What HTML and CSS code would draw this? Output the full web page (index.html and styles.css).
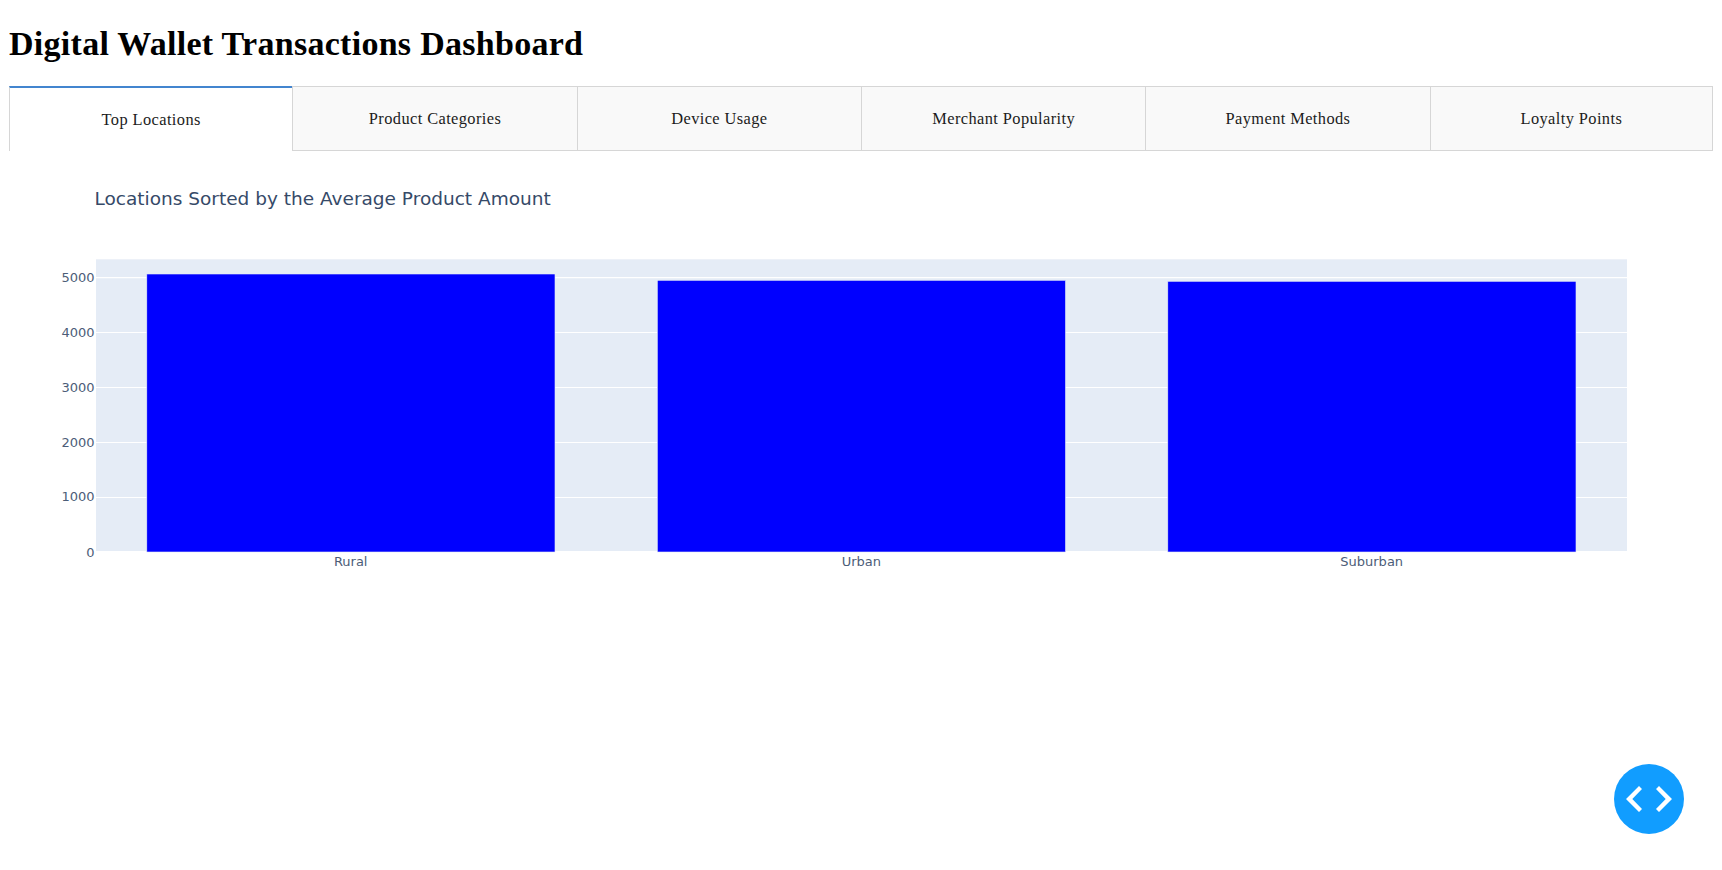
FILE: index.html
```html
<!DOCTYPE html>
<html lang="en">
<head>
<meta charset="utf-8">
<title>Digital Wallet Transactions Dashboard</title>
<link rel="stylesheet" href="styles.css">
</head>
<body>
<h1>Digital Wallet Transactions Dashboard</h1>
<nav class="tabs">
<div class="tab selected">Top Locations</div><div class="tab">Product Categories</div><div class="tab">Device Usage</div><div class="tab">Merchant Popularity</div><div class="tab">Payment Methods</div><div class="tab">Loyalty Points</div>
</nav>
<svg class="chart" width="1704" height="450" viewBox="9 151 1704 450">
<rect class="plot" x="96" y="259.3" width="1531" height="292.7"/>
<path class="grid" d="M96 497.5H1627M96 442.5H1627M96 387.5H1627M96 332.5H1627M96 277.6H1627"/>
<path class="zero" d="M96 552H1627"/>
<rect class="bar" x="146.8" y="274" width="408.2" height="278"/>
<rect class="bar" x="657.3" y="280.3" width="408.2" height="271.7"/>
<rect class="bar" x="1167.8" y="281.3" width="408.2" height="270.7"/>
<text class="title" x="94.5" y="205">Locations Sorted by the Average Product Amount</text>
<g class="ylab"><text x="94.5" y="556.5">0</text><text x="94.5" y="501">1000</text><text x="94.5" y="447">2000</text><text x="94.5" y="392">3000</text><text x="94.5" y="337">4000</text><text x="94.5" y="282">5000</text></g>
<g class="xlab"><text x="350.7" y="566">Rural</text><text x="861.3" y="566">Urban</text><text x="1371.7" y="566">Suburban</text></g>
</svg>
<button class="debug" aria-label="Toggle developer tools"><svg width="70" height="70" viewBox="0 0 70 70"><path d="M25 22L12 35l13 13 3-3-9.7-10L28 25zM45 22l13 13-13 13-3-3 9.7-10L42 25z"/></svg></button>
</body>
</html>
```
FILE: styles.css
```css
body { margin: 8px 9px; font-family: "Liberation Serif", serif; background: #fff; }
h1 { margin: 14px 0 21px; font-size: 34px; letter-spacing: 0.28px; line-height: 43px; }
.tabs { display: flex; height: 65px; }
.tab { flex: 1; box-sizing: border-box; display: flex; align-items: center; justify-content: center; font-size: 16.4px; letter-spacing: 0.4px; color: #1c1c1c; background: #f9f9f9; border: 1px solid #d6d6d6; border-right: 0; }
.tab:first-child, .tab:last-child { flex: 0 0 283.4px; }
.tab:last-child { border-right: 1px solid #d6d6d6; }
.selected { background: #fff; border-top: 2px solid #4385cf; border-bottom: 0; }
.chart { display: block; font-family: "DejaVu Sans", sans-serif; }
.plot { fill: #e5ecf6; }
.grid { stroke: #fff; stroke-width: 1.2; }
.zero { stroke: #fff; stroke-width: 2; }
.bar { fill: #00f; stroke: #e5ecf6; stroke-width: 0.6; }
.title { font-size: 18.5px; fill: #364a68; }
.ylab, .xlab { font-size: 13px; fill: #4c5d78; }
.ylab { text-anchor: end; }
.xlab { text-anchor: middle; }
.debug { position: fixed; left: 1614px; top: 764px; width: 70px; height: 70px; border: 0; border-radius: 50%; background: #119dff; padding: 0; }
.debug svg { display: block; }
.debug path { fill: #fff; }
```
